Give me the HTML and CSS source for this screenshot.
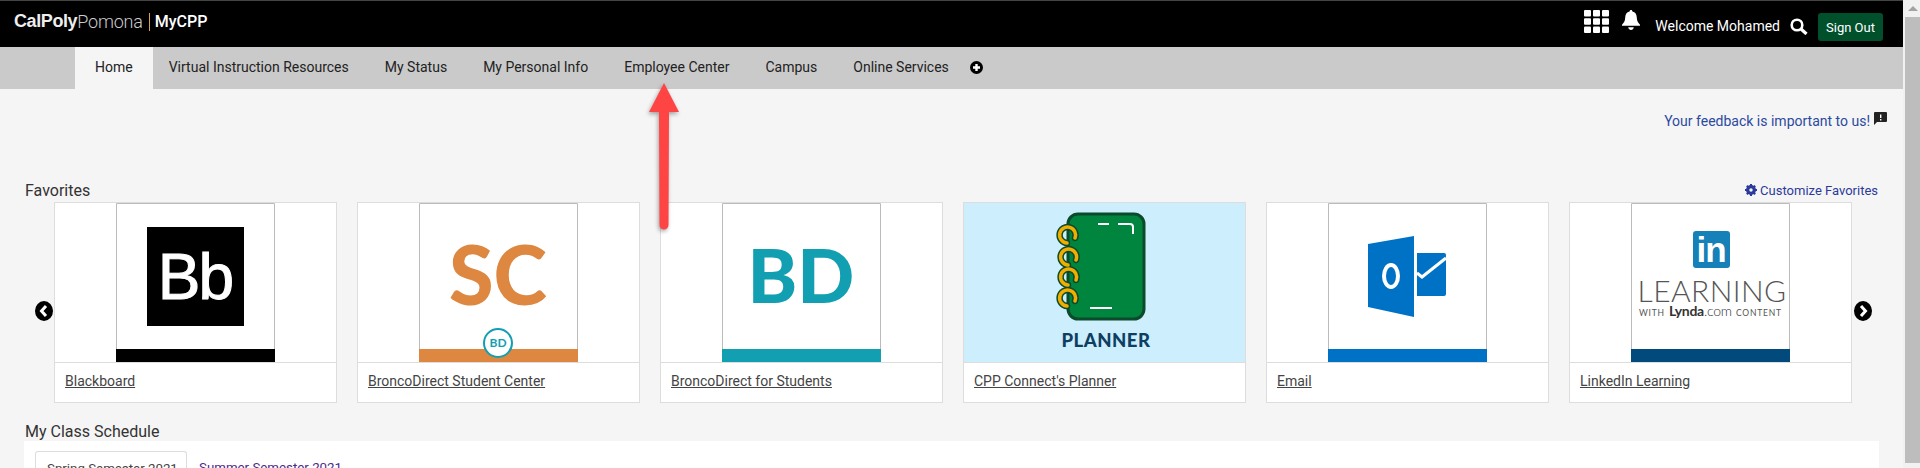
FILE: index.html
```
<!DOCTYPE html>
<html lang="en">

<head>
    <meta charset="UTF-8">
    <title>MyCPP</title>
    <link rel="stylesheet" href="styles.css">
</head>

<body>
    <div class="page">
        <div class="main">
            <header class="topbar">
                <div class="logo">
                    <span class="logo-bold">CalPoly</span><span class="logo-light">Pomona</span>
                    <span class="logo-app">MyCPP</span>
                </div>
                <div class="topbar-right">
                    <svg class="grid-icon" width="25" height="23" viewBox="0 0 25 23" fill="#fff">
                        <rect x="0" y="0" width="7" height="6.4" rx="1"/><rect x="9" y="0" width="7" height="6.4" rx="1"/><rect x="18" y="0" width="7" height="6.4" rx="1"/>
                        <rect x="0" y="8.3" width="7" height="6.4" rx="1"/><rect x="9" y="8.3" width="7" height="6.4" rx="1"/><rect x="18" y="8.3" width="7" height="6.4" rx="1"/>
                        <rect x="0" y="16.6" width="7" height="6.4" rx="1"/><rect x="9" y="16.6" width="7" height="6.4" rx="1"/><rect x="18" y="16.6" width="7" height="6.4" rx="1"/>
                    </svg>
                    <svg class="bell-icon" width="18" height="20" viewBox="0 0 18 20" fill="#fff">
                        <path d="M9 0c.9 0 1.4.6 1.4 1.5 3 .6 4.3 3 4.4 6 .1 3.400 1 5 3.200 7.200v1H0v-1C2.200 12.500 3.100 10.900 3.200 7.500c.1-3 1.400-5.400 4.400-6C7.600.6 8.100 0 9 0z"/>
                        <path d="M6.200 17.300h5.600C11.500 19 10.400 20 9 20s-2.500-1-2.800-2.700z"/>
                    </svg>
                    <span class="welcome">Welcome Mohamed</span>
                    <svg class="search-icon" width="18" height="17" viewBox="0 0 18 17" fill="none" stroke="#fff">
                        <circle cx="7" cy="7" r="5.300" stroke-width="2.600"/>
                        <path d="M11 11l5.500 5" stroke-width="3.200"/>
                    </svg>
                    <button class="signout">Sign Out</button>
                </div>
            </header>

            <nav class="navbar">
                <a class="nav-tab active">Home</a>
                <a class="nav-tab">Virtual Instruction Resources</a>
                <a class="nav-tab">My Status</a>
                <a class="nav-tab">My Personal Info</a>
                <a class="nav-tab">Employee Center</a>
                <a class="nav-tab">Campus</a>
                <a class="nav-tab">Online Services</a>
                <svg class="round-icon" width="13" height="13" viewBox="0 0 13 13">
                    <circle cx="6.500" cy="6.500" r="6.500" fill="#000"/>
                    <path d="M6.500 3v7M3 6.500h7" stroke="#fff" stroke-width="2.400"/>
                </svg>
            </nav>

            <div class="content">
                <div class="feedback">
                    <a>Your feedback is important to us!</a>
                    <svg width="13" height="13" viewBox="0 0 13 13">
                        <path d="M1 0h11a1 1 0 0 1 1 1v8a1 1 0 0 1-1 1H3l-3 3V1a1 1 0 0 1 1-1z" fill="#222"/>
                        <path d="M6 2.500h1.400v3.500H6zM6 7h1.400v1.400H6z" fill="#fff"/>
                    </svg>
                </div>

                <div class="fav-head">
                    <h2>Favorites</h2>
                    <a class="customize">
                        <svg width="12" height="12" viewBox="0 0 12 12">
                            <circle cx="6" cy="6" r="3.700" fill="none" stroke="#2c3a9c" stroke-width="2.600"/>
                            <path d="M6 0v12M0 6h12M1.800 1.800l8.400 8.400M10.200 1.800l-8.400 8.400" stroke="#2c3a9c" stroke-width="2"/>
                            <circle cx="6" cy="6" r="1.700" fill="#f5f5f5"/>
                        </svg>
                        Customize Favorites
                    </a>
                </div>

                <div class="carousel">
                    <svg class="round-icon" width="18" height="20" viewBox="0 0 18 20">
                        <ellipse cx="9" cy="10" rx="9" ry="10" fill="#000"/>
                        <path d="M11 5L6.500 10l4.500 5" fill="none" stroke="#fff" stroke-width="3"/>
                    </svg>

                    <div class="cards">
                        <div class="card">
                            <div class="thumb">
                                <svg width="159" height="159" viewBox="0 0 159 159">
                                    <path d="M.5 146V.5h158V146" fill="#fff" stroke="#bbb"/>
                                    <rect x="31" y="24" width="97" height="99" fill="#000"/>
                                    <text x="79" y="96" text-anchor="middle" class="t-bb">Bb</text>
                                    <rect y="146" width="159" height="13" fill="#000"/>
                                </svg>
                            </div>
                            <a class="card-label">Blackboard</a>
                        </div>

                        <div class="card">
                            <div class="thumb">
                                <svg width="159" height="159" viewBox="0 0 159 159">
                                    <path d="M.5 146V.5h158V146" fill="#fff" stroke="#bbb"/>
                                    <text x="79" y="102" text-anchor="middle" class="t-sc">SC</text>
                                    <rect y="146" width="159" height="13" fill="#dd8740"/>
                                    <circle cx="79" cy="140" r="14" fill="#fff" stroke="#129fb2" stroke-width="2"/>
                                    <text x="79" y="144" text-anchor="middle" class="t-mini">BD</text>
                                </svg>
                            </div>
                            <a class="card-label">BroncoDirect Student Center</a>
                        </div>

                        <div class="card">
                            <div class="thumb">
                                <svg width="159" height="159" viewBox="0 0 159 159">
                                    <path d="M.5 146V.5h158V146" fill="#fff" stroke="#bbb"/>
                                    <text x="79" y="100" text-anchor="middle" class="t-bd">BD</text>
                                    <rect y="146" width="159" height="13" fill="#129fb2"/>
                                </svg>
                            </div>
                            <a class="card-label">BroncoDirect for Students</a>
                        </div>

                        <div class="card">
                            <div class="thumb planner">
                                <svg width="281" height="159" viewBox="0 0 281 159">
                                    <rect x="104" y="11" width="76" height="105" rx="10" fill="#00853e" stroke="#0b4a2b" stroke-width="3"/>
                                    <g fill="none" stroke-linecap="round">
                                        <g stroke="#0b4a2b" stroke-width="6.500">
                                            <path d="M111 35a8 8 0 1 0-8 5"/><path d="M112 57a8 8 0 1 0-8 5"/><path d="M112 77a8 8 0 1 0-8 5"/><path d="M111 98a8 8 0 1 0-8 5"/>
                                        </g>
                                        <g stroke="#f2ae00" stroke-width="3.500">
                                            <path d="M111 35a8 8 0 1 0-8 5"/><path d="M112 57a8 8 0 1 0-8 5"/><path d="M112 77a8 8 0 1 0-8 5"/><path d="M111 98a8 8 0 1 0-8 5"/>
                                        </g>
                                    </g>
                                    <path d="M134 21h11M154 21h12a3 3 0 0 1 3 3v7M126 105h22" fill="none" stroke="#fff" stroke-width="2"/>
                                    <text x="142" y="144" text-anchor="middle" class="t-planner">PLANNER</text>
                                </svg>
                            </div>
                            <a class="card-label">CPP Connect's Planner</a>
                        </div>

                        <div class="card">
                            <div class="thumb">
                                <svg width="159" height="159" viewBox="0 0 159 159">
                                    <path d="M.5 146V.5h158V146" fill="#fff" stroke="#bbb"/>
                                    <path d="M40 41l46-8v81l-46-10z" fill="#0072c6"/>
                                    <ellipse cx="63" cy="73" rx="7" ry="11" fill="none" stroke="#fff" stroke-width="4"/>
                                    <path d="M89 50h27a2 2 0 0 1 2 2v39a2 2 0 0 1-2 2H89z" fill="#0072c6"/>
                                    <path d="M89 70l5 4 24-19" fill="none" stroke="#fff" stroke-width="3"/>
                                    <rect y="146" width="159" height="13" fill="#0072c6"/>
                                </svg>
                            </div>
                            <a class="card-label">Email</a>
                        </div>

                        <div class="card">
                            <div class="thumb">
                                <svg width="159" height="159" viewBox="0 0 159 159">
                                    <path d="M.5 146V.5h158V146" fill="#fff" stroke="#bbb"/>
                                    <rect x="62" y="28" width="37" height="37" rx="3" fill="#1680b8"/>
                                    <text x="80" y="59" text-anchor="middle" class="t-in">in</text>
                                    <text x="81" y="99" text-anchor="middle" class="t-learning">LEARNING</text>
                                    <text x="8" y="113" class="t-with">WITH</text>
                                    <text x="38" y="113" class="t-lynda">Lynda</text>
                                    <text x="73" y="113" class="t-com">.com</text>
                                    <text x="105" y="113" class="t-with">CONTENT</text>
                                    <rect y="146" width="159" height="13" fill="#024a7c"/>
                                </svg>
                            </div>
                            <a class="card-label">LinkedIn Learning</a>
                        </div>
                    </div>

                    <svg class="round-icon" width="18" height="20" viewBox="0 0 18 20">
                        <ellipse cx="9" cy="10" rx="9" ry="10" fill="#000"/>
                        <path d="M7 5L11.500 10 7 15" fill="none" stroke="#fff" stroke-width="3"/>
                    </svg>
                </div>

                <h2 class="schedule-title">My Class Schedule</h2>
                <div class="schedule">
                    <div class="tabs">
                        <a class="tab active">Spring Semester 2021</a>
                        <a class="tab">Summer Semester 2021</a>
                    </div>
                </div>
            </div>

            <svg class="arrow" width="40" height="156" viewBox="0 0 40 156">
                <path d="M20 1L35 30H25L24.500 143a4.500 4.500 0 0 1-9 0L15 30H5z" fill="#ff4444"/>
            </svg>
        </div>

        <div class="scrollbar">
            <div class="scroll-up"></div>
            <div class="scroll-thumb"></div>
        </div>
    </div>
</body>

</html>
```

FILE: styles.css
```
* {
    box-sizing: border-box;
    margin: 0;
    padding: 0;
}

body {
    height: 468px;
    overflow: hidden;
    font-family: Roboto, "Liberation Sans", sans-serif;
    font-size: 14px;
    color: #333;
    background-color: #f5f5f5;
}

.page {
    display: flex;
    height: 468px;
}

.main {
    position: relative;
    flex: 1;
    min-width: 0;
    overflow: hidden;
}

/* top black bar */
.topbar {
    display: flex;
    justify-content: space-between;
    align-items: center;
    height: 47px;
    padding: 0 20px 0 14px;
    background-color: #000;
    border-top: 1px solid #444;
    color: #fff;
}

.logo {
    display: flex;
    align-items: center;
    margin-top: -5px;
}

.logo-bold {
    font-family: "Liberation Sans", Arial, sans-serif;
    font-size: 18px;
    font-weight: bold;
    letter-spacing: -0.4px;
    color: #eee;
}

.logo-light {
    font-size: 18px;
    font-weight: 300;
    letter-spacing: -0.2px;
    color: #ccc;
}

.logo-app {
    margin-left: 6px;
    padding-left: 5px;
    border-left: 1px solid #d9a441;
    font-size: 16px;
    font-weight: 500;
    line-height: 18px;
}

.topbar-right {
    display: flex;
    align-items: center;
    align-self: stretch;
}

.grid-icon {
    margin: -5px 13px 0 2px;
}

.bell-icon {
    margin: -8px 14px 0 0;
}

.welcome {
    font-size: 14px;
    margin: 4px 0 0 1px;
}

.search-icon {
    margin: 4px 10px 0 10px;
}

.signout {
    width: 65px;
    height: 28px;
    margin-top: 6px;
    border: 0;
    border-radius: 3px;
    background-color: #01502c;
    color: #fff;
    font-family: Roboto, sans-serif;
    font-size: 13px;
}

/* tabs under the top bar */
.navbar {
    display: flex;
    align-items: center;
    height: 42px;
    padding-left: 75px;
    background-color: #cacaca;
}

.nav-tab {
    padding: 0 18px;
    line-height: 40px;
    height: 42px;
    color: #222;
}

.nav-tab.active {
    padding: 0 20px;
    margin-right: -2px;
    background-color: #f5f5f5;
}

.round-icon {
    flex-shrink: 0;
}

.navbar .round-icon {
    margin: -2px 0 0 3px;
}

.content {
    padding: 0 0 0 25px;
}

.feedback {
    display: flex;
    justify-content: flex-end;
    align-items: flex-start;
    gap: 4px;
    height: 20px;
    margin-top: 22px;
    padding-right: 16px;
    font-size: 14px;
    line-height: 20px;
    color: #2b4aa0;
}

.feedback svg {
    margin-top: 1px;
}

.fav-head {
    display: flex;
    justify-content: space-between;
    align-items: center;
    height: 20px;
    margin-top: 49px;
    padding-right: 25px;
}

h2 {
    font-size: 16px;
    font-weight: 400;
    color: #333;
}

.customize {
    display: flex;
    align-items: center;
    gap: 3px;
    font-size: 13px;
    color: #2c3a9c;
}

.carousel {
    display: flex;
    align-items: center;
    gap: 1px;
    margin: 2px 0 0 10px;
}

.carousel .round-icon {
    margin-top: 17px;
}

.carousel .round-icon:last-child {
    margin-left: 1px;
}

.cards {
    display: grid;
    grid-template-columns: repeat(6, 283px);
    gap: 20px;
}

.card {
    display: flex;
    flex-direction: column;
    height: 201px;
    border: 1px solid #ddd;
    background-color: #fff;
}

.thumb {
    display: flex;
    justify-content: center;
    height: 160px;
    border-bottom: 1px solid #ddd;
}

.planner {
    background-color: #cdeefd;
}

.card-label {
    align-self: flex-start;
    margin: 8px 0 0 10px;
    line-height: 20px;
    text-decoration: underline;
    color: #444;
}

.t-bb {
    font-family: "Liberation Sans", sans-serif;
    font-size: 64px;
    letter-spacing: -2px;
    fill: #fff;
    stroke: #fff;
    stroke-width: 1px;
}

.t-sc {
    font-family: Lato, sans-serif;
    font-size: 81px;
    font-weight: 900;
    fill: #dd8740;
}

.t-mini {
    font-family: Lato, sans-serif;
    font-size: 12px;
    font-weight: 700;
    fill: #129fb2;
}

.t-bd {
    font-family: Lato, sans-serif;
    font-size: 75px;
    font-weight: 900;
    fill: #129fb2;
}

.t-planner {
    font-family: Lato, sans-serif;
    font-size: 18.5px;
    font-weight: 900;
    letter-spacing: 0.5px;
    fill: #0e3f63;
}

.t-in {
    font-family: "Liberation Sans", sans-serif;
    font-size: 35px;
    font-weight: bold;
    letter-spacing: -1px;
    fill: #fff;
}

.t-learning {
    font-family: Lato, sans-serif;
    font-size: 30px;
    font-weight: 300;
    letter-spacing: 0.4px;
    fill: #555;
}

.t-with {
    font-family: Lato, sans-serif;
    font-size: 8.5px;
    letter-spacing: 0.8px;
    fill: #555;
}

.t-lynda {
    font-family: Lato, sans-serif;
    font-size: 14px;
    font-weight: 700;
    letter-spacing: -0.3px;
    fill: #333;
}

.t-com {
    font-family: Lato, sans-serif;
    font-size: 14px;
    font-weight: 300;
    letter-spacing: -0.3px;
    fill: #333;
}

.schedule-title {
    margin-top: 19px;
    line-height: 20px;
}

.schedule {
    height: 40px;
    margin: -1px 24px 0 -1px;
    padding: 10px 0 0 11px;
    background-color: #fff;
}

.tabs {
    display: flex;
    gap: 1px;
}

.tab {
    padding: 7px 11px;
    font-size: 13.3px;
    line-height: 20px;
    white-space: nowrap;
    color: #4b2a8c;
}

.tab.active {
    width: 152px;
    border: 1px solid #ddd;
    border-bottom: 0;
    border-radius: 3px 3px 0 0;
    color: #444;
}

.arrow {
    position: absolute;
    left: 644px;
    top: 82px;
    filter: drop-shadow(-1px 2px 2px rgba(0, 0, 0, 0.35));
}

/* browser scrollbar */
.scrollbar {
    flex-shrink: 0;
    width: 17px;
    padding-left: 2px;
    background-color: #f1f1f1;
}

.scroll-up {
    height: 17px;
    position: relative;
}

.scroll-up::after {
    content: "";
    position: absolute;
    left: 3px;
    top: 6px;
    border: 5px solid transparent;
    border-top: 0;
    border-bottom-color: #a3a3a3;
}

.scroll-thumb {
    height: 446px;
    background-color: #bdbdbd;
}
```
